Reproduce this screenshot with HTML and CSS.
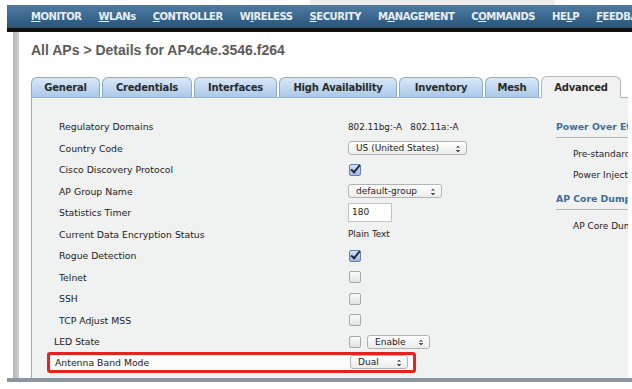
FILE: index.html
```html
<!DOCTYPE html>
<html lang="en">
<head>
    <meta charset="UTF-8">
    <title>All APs - Details</title>
    <link rel="stylesheet" href="styles.css">
</head>
<body>

<div class="topstrip"><span class="topstrip-gray"></span></div>

<nav class="menubar">
    <a href="#"><u>M</u>ONITOR</a>
    <a href="#"><u>W</u>LANs</a>
    <a href="#"><u>C</u>ONTROLLER</a>
    <a href="#" class="active">W<u>I</u>RELESS</a>
    <a href="#"><u>S</u>ECURITY</a>
    <a href="#">M<u>A</u>NAGEMENT</a>
    <a href="#">C<u>O</u>MMANDS</a>
    <a href="#">HE<u>L</u>P</a>
    <a href="#"><u>F</u>EEDBACK</a>
</nav>

<div class="frame">
    <div class="sidebar"></div>

    <div class="main">
        <h1 class="title">All APs &gt; Details for AP4c4e.3546.f264</h1>

        <div class="tabs">
            <span class="tab t-general">General</span>
            <span class="tab t-cred">Credentials</span>
            <span class="tab t-intf">Interfaces</span>
            <span class="tab t-ha">High Availability</span>
            <span class="tab t-inv">Inventory</span>
            <span class="tab t-mesh">Mesh</span>
            <span class="tab t-adv active">Advanced</span>
        </div>

        <div class="panel">
            <div class="fields">
                <div class="row"><span class="label">Regulatory Domains</span><span class="value">802.11bg:-A&nbsp;&nbsp;&nbsp;802.11a:-A</span></div>
                <div class="row"><span class="label">Country Code</span><span class="value"><span class="select sel-country">US (United States)<i class="arrows"></i></span></span></div>
                <div class="row"><span class="label">Cisco Discovery Protocol</span><span class="value"><span class="check on"></span></span></div>
                <div class="row"><span class="label">AP Group Name</span><span class="value"><span class="select sel-group">default-group<i class="arrows"></i></span></span></div>
                <div class="row"><span class="label">Statistics Timer</span><span class="value"><span class="textbox">180</span></span></div>
                <div class="row"><span class="label">Current Data Encryption Status</span><span class="value">Plain Text</span></div>
                <div class="row"><span class="label">Rogue Detection</span><span class="value"><span class="check on"></span></span></div>
                <div class="row"><span class="label">Telnet</span><span class="value"><span class="check"></span></span></div>
                <div class="row"><span class="label">SSH</span><span class="value"><span class="check"></span></span></div>
                <div class="row"><span class="label">TCP Adjust MSS</span><span class="value"><span class="check"></span></span></div>
                <div class="row row-led"><span class="label">LED State</span><span class="value"><span class="check"></span><span class="select sel-enable">Enable<i class="arrows"></i></span></span></div>
                <div class="row row-antenna"><span class="label">Antenna Band Mode</span><span class="value"><span class="select sel-dual">Dual<i class="arrows"></i></span></span></div>
            </div>

            <div class="side">
                <div class="side-head">Power Over Ethernet Settings</div>
                <div class="side-item">Pre-standard 802.3af switches</div>
                <div class="side-item">Power Injector State</div>
                <div class="side-head">AP Core Dump</div>
                <div class="side-item">AP Core Dump</div>
            </div>
        </div>
    </div>
</div>

</body>
</html>
```

FILE: styles.css
```css
body {
    margin: 0;
    background: #fff;
    font-family: "DejaVu Sans", Verdana, sans-serif;
    color: #222;
    overflow: hidden;
}

.topstrip {
    height: 5px;
    display: flex;
}

.topstrip-gray {
    margin-left: 310px;
    width: 245px;
    background: #ececec;
}

.menubar {
    margin-left: 7px;
    height: 23px;
    background: linear-gradient(#4d7ca3, #2a5478);
    border-bottom: 4px solid #111;
    display: flex;
    align-items: center;
    padding-left: 24px;
    gap: 17px;
    white-space: nowrap;
    overflow: hidden;
}

.menubar a {
    color: #e9eff5;
    text-decoration: none;
    font-size: 10px;
    font-weight: bold;
    letter-spacing: -0.45px;
    line-height: 23px;
    position: relative;
}

.menubar a.active::after {
    content: "";
    position: absolute;
    left: -9px;
    right: -8px;
    bottom: -4px;
    height: 3px;
    background: #e9962a;
}

.frame {
    margin-left: 7px;
    height: 346px;
    display: flex;
    border-bottom: 4px solid #8b959d;
}

.sidebar {
    margin-left: 6px;
    width: 6px;
    background: linear-gradient(90deg, #b8b8b8, #cfcfcf);
}

.main {
    flex: 1;
    padding-left: 12px;
    min-width: 0;
}

.title {
    margin: 10px 0 0;
    font-family: "Liberation Sans", Arial, sans-serif;
    font-size: 14px;
    font-weight: bold;
    color: #5b5b5b;
    height: 34px;
}

.tabs {
    display: flex;
    gap: 2px;
    height: 21px;
    align-items: flex-end;
}

.tab {
    height: 20px;
    box-sizing: border-box;
    border: 1px solid #8aaccc;
    border-bottom: none;
    border-radius: 6px 6px 0 0;
    background: linear-gradient(#d9e8f7, #a9c9ea);
    font-size: 10px;
    font-weight: bold;
    color: #2a2a2a;
    display: flex;
    align-items: center;
    justify-content: center;
    letter-spacing: -0.2px;
}

.t-general { width: 69px; }
.t-cred { width: 90px; }
.t-intf { width: 83px; }
.t-ha { width: 118px; }
.t-inv { width: 84px; }
.t-mesh { width: 54px; }
.t-adv { width: 80px; }

.tab.active {
    height: 22px;
    margin-bottom: -1px;
    background: #f1f1f1;
    border-color: #b9b9b9;
    position: relative;
}

.panel {
    height: 280px;
    background: #f0f1f1;
    border-top: 1px solid #9cb3c9;
    border-left: 1px solid #a9a9a9;
    display: flex;
    overflow: hidden;
    margin-right: 4px;
}

.fields {
    width: 500px;
    flex-shrink: 0;
    padding-top: 18px;
    padding-left: 16px;
}

.row {
    display: flex;
    align-items: center;
    height: 21.5px;
    font-size: 9.3px;
    padding-left: 11px;
}

.label {
    width: 289px;
    flex-shrink: 0;
}

.value {
    display: flex;
    align-items: center;
    gap: 6px;
    font-size: 8.8px;
}

.row-led {
    padding-left: 6px;
}

.row-led .label {
    width: 294px;
}

.row-antenna {
    margin-top: -1px;
    height: 15px;
    width: 358px;
    border: 3px solid #e3231f;
    border-radius: 3px;
    padding-left: 5px;
    margin-left: -1px;
    background: #fbfbfb;
}

.row-antenna .label {
    width: 295px;
}

.select {
    position: relative;
    height: 14px;
    box-sizing: border-box;
    border: 1px solid #b3b3b3;
    border-radius: 3px;
    background: linear-gradient(#ffffff, #ececec);
    padding-left: 7px;
    line-height: 12px;
    font-size: 9px;
    color: #222;
}

.arrows {
    position: absolute;
    right: 6px;
    top: 3px;
    width: 4px;
    height: 7px;
    background:
        linear-gradient(to bottom right, transparent 49%, #555 50%) top left / 2px 2.5px no-repeat,
        linear-gradient(to bottom left, transparent 49%, #555 50%) top right / 2px 2.5px no-repeat,
        linear-gradient(to top right, transparent 49%, #555 50%) bottom left / 2px 2.5px no-repeat,
        linear-gradient(to top left, transparent 49%, #555 50%) bottom right / 2px 2.5px no-repeat;
}

.sel-country { width: 119px; }
.sel-group { width: 94px; }
.sel-enable { width: 63px; }
.sel-dual { width: 58px; }

.textbox {
    width: 44px;
    height: 19px;
    box-sizing: border-box;
    border: 1px solid #c4c4c4;
    background: #fff;
    font-size: 9px;
    padding-left: 3px;
    line-height: 17px;
}

.check {
    width: 10px;
    height: 10px;
    margin-left: 1px;
    border: 1px solid #a8a8a8;
    border-radius: 2px;
    background: linear-gradient(#fafafa, #e2e2e2);
    position: relative;
}

.check.on {
    border-color: #6b7fa8;
    background: linear-gradient(#d6e3f7, #9fb8e4);
}

.check.on::after {
    content: "";
    position: absolute;
    left: 3px;
    top: -2px;
    width: 3px;
    height: 8px;
    border: solid #1d2a45;
    border-width: 0 2px 2px 0;
    transform: rotate(40deg);
}

.side {
    flex: 1;
    padding-left: 8px;
    padding-top: 23px;
    white-space: nowrap;
    font-size: 9px;
}

.side-head {
    font-weight: bold;
    color: #3a6e9e;
    font-size: 9.3px;
    border-bottom: 1px solid #a9bccd;
    padding-bottom: 5px;
    margin-bottom: 6px;
}

.side-item + .side-head {
    margin-top: 7px;
}

.side-item {
    padding-left: 17px;
    height: 21px;
    line-height: 21px;
}
```
